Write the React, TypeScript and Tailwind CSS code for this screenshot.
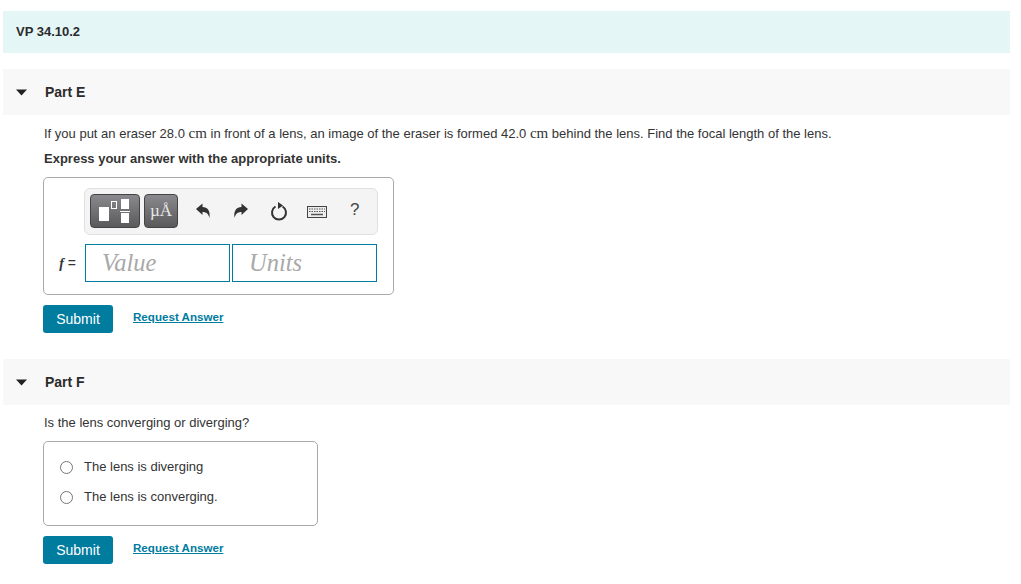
const font = { sans: "font-['Liberation_Sans',Arial,sans-serif]" };

const PartHeader = ({ title }: { title: string }) => (
  <div className="h-[46px] bg-[#f8f8f8] flex items-center">
    {/* caret */}
    <svg width="11" height="7" viewBox="0 0 11 7" className="ml-[13px]">
      <path d="M0 0.5H11L5.5 6.5Z" fill="#222" />
    </svg>
    <span className="ml-[18px] text-[14px] font-bold text-[#2b2b2b]">{title}</span>
  </div>
);

const Actions = () => (
  <div className="flex items-start">
    <button className="w-[70px] h-[28px] bg-[#007c9f] rounded-[3px] text-white text-[14px] leading-[28px] text-center">
      Submit
    </button>
    <a className="ml-[20px] mt-[4px] text-[11.6px] leading-[16px] font-bold text-[#007c9f] underline">
      Request Answer
    </a>
  </div>
);

const Radio = ({ label }: { label: string }) => (
  <div className="flex items-center h-[30px]">
    <span className="w-[13px] h-[13px] rounded-full border border-[#767676] bg-white ml-[16px]" />
    <span className="ml-[11px] text-[13px] text-[#333]">{label}</span>
  </div>
);

const ToolIcon = ({ flip }: { flip?: boolean }) => (
  <svg width="16" height="16" viewBox="0 0 16 16" className={flip ? "-scale-x-100" : ""}>
    <path d="M1 6L7.5 0.5V4C12.5 4 15.5 7.5 14.5 15C13.5 11 11.5 9 7.5 9V12Z" fill="#333" />
  </svg>
);

export default function App() {
  return (
    <div className={`${font.sans} w-[1021px] h-[584px] bg-white pt-[11px] pl-[3px] pr-[11px] overflow-hidden`}>
      <div className="h-[42px] bg-[#e5f6f7] flex items-center pl-[13px] text-[13px] font-bold text-[#2b2b2b]">
        VP 34.10.2
      </div>

      <div className="mt-[16px]">
        <PartHeader title="Part E" />
        <div className="pl-[41px]">
          <p className="mt-[9px] h-[18px] text-[13px] leading-[18px] text-[#333] whitespace-nowrap">
            If you put an eraser 28.0 <span className="font-['Liberation_Serif',serif] text-[15px]">cm</span> in front of a
            lens, an image of the eraser is formed 42.0 <span className="font-['Liberation_Serif',serif] text-[15px]">cm</span> behind
            the lens. Find the focal length of the lens.
          </p>
          <p className="mt-[8px] h-[18px] text-[13px] leading-[18px] font-bold text-[#333]">
            Express your answer with the appropriate units.
          </p>

          <div className="-ml-[1px] mt-[9px] w-[351px] h-[118px] border border-[#a9a9a9] rounded-[5px]">
            <div className="ml-[40px] mt-[10px] w-[294px] h-[47px] bg-[#f4f4f4] border border-[#e0e0e0] rounded-[6px] flex items-start pt-[5px] pl-[5px]">
              <div className="w-[50px] h-[34px] rounded-[4px] border border-[#444] bg-gradient-to-b from-[#8a8a8e] to-[#5a5a5c] flex items-center justify-center">
                <svg width="34" height="26" viewBox="0 0 34 26">
                  <rect x="1" y="9" width="10" height="14" fill="#fff" />
                  <rect x="13.5" y="3.5" width="5" height="7" fill="none" stroke="#fff" />
                  <rect x="23" y="1" width="8" height="10" fill="#fff" />
                  <rect x="22" y="13" width="10" height="1" fill="#fff" />
                  <rect x="23" y="15" width="8" height="10" fill="#fff" />
                </svg>
              </div>
              <div className="ml-[4px] w-[34px] h-[34px] rounded-[4px] border border-[#444] bg-gradient-to-b from-[#8a8a8e] to-[#5a5a5c] flex items-center justify-center text-[#e8e8e8] text-[17px] font-['Liberation_Serif',serif]">
                µÅ
              </div>
              <div className="ml-[17px] mt-[9px]"><ToolIcon /></div>
              <div className="ml-[22px] mt-[9px]"><ToolIcon flip /></div>
              <div className="ml-[21px] mt-[7px]">
                <svg width="18" height="20" viewBox="0 0 18 20">
                  <path d="M5.5 5.5A7 7 0 1 0 12.5 5.5" fill="none" stroke="#333" strokeWidth="2" />
                  <path d="M8 1V8L13 4.5Z" fill="#333" />
                </svg>
              </div>
              <div className="ml-[19px] mt-[12px]">
                <svg width="20" height="12" viewBox="0 0 20 12">
                  <rect x="0.5" y="0.5" width="19" height="11" fill="#eee" stroke="#444" />
                  <path d="M2 3h16M2 5.5h16" stroke="#555" strokeDasharray="1.5 1" />
                  <path d="M4 8.5h12" stroke="#555" strokeWidth="1.5" />
                </svg>
              </div>
              <span className="ml-[23px] mt-[4px] text-[17px] leading-[24px] text-[#444]">?</span>
            </div>

            <div className="flex items-center mt-[9px]">
              <span className="w-[41px] pr-[9px] text-right text-[14px] text-[#333] whitespace-nowrap">
                <i className="font-['Liberation_Serif',serif] font-bold">f</i> =
              </span>
              <div className="w-[145px] h-[38px] border border-[#007c9f] pl-[16px] font-['Liberation_Serif',serif] italic text-[24.5px] leading-[36px] text-[#a9a9a9]">
                Value
              </div>
              <div className="ml-[2px] w-[145px] h-[38px] border border-[#007c9f] pl-[16px] font-['Liberation_Serif',serif] italic text-[24.5px] leading-[36px] text-[#a9a9a9]">
                Units
              </div>
            </div>
          </div>

          <div className="-ml-[1px] mt-[10px]">
            <Actions />
          </div>
        </div>
      </div>

      <div className="mt-[26px]">
        <PartHeader title="Part F" />
        <div className="pl-[41px]">
          <p className="mt-[9px] h-[18px] text-[13px] leading-[18px] text-[#333]">Is the lens converging or diverging?</p>
          <div className="-ml-[1px] mt-[9px] w-[275px] h-[85px] border border-[#a9a9a9] rounded-[5px] pt-[10px]">
            <Radio label="The lens is diverging" />
            <Radio label="The lens is converging." />
          </div>
          <div className="-ml-[1px] mt-[10px]">
            <Actions />
          </div>
        </div>
      </div>
    </div>
  );
}
